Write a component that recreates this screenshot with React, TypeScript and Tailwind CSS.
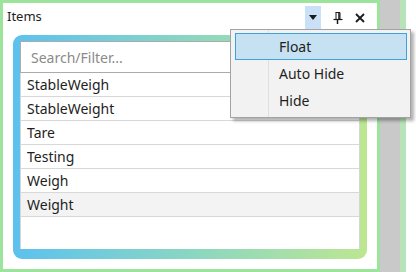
import React from "react"

const items = ["StableWeigh", "StableWeight", "Tare", "Testing", "Weigh", "Weight"]
const menuItems = ["Float", "Auto Hide", "Hide"]

function PinIcon() {
  return (
    <svg width="10" height="12" viewBox="0 0 10 12" fill="none" stroke="#1a1a1a">
      <path d="M2.5 0.5 H7 V7 M3 0.5 V7" strokeWidth="1" />
      <path d="M6 0.5 V7" strokeWidth="1.5" />
      <path d="M0.5 7.5 H9.5" strokeWidth="1.2" />
      <path d="M4.5 7.5 V12" strokeWidth="1.5" />
    </svg>
  )
}

function CloseIcon() {
  return (
    <svg width="10" height="10" viewBox="0 0 10 10" stroke="#1a1a1a" strokeWidth="1.8">
      <path d="M1 1 L9 9 M9 1 L1 9" />
    </svg>
  )
}

export default function App() {
  return (
    <div className="relative flex w-[416px] h-[272px] bg-white font-['Segoe_UI','Noto_Sans',sans-serif] text-[#1e1e1e]">
      <div className="flex flex-col w-[380px] h-full border-[3px] border-[#9ce39c] bg-white">
        {/* header */}
        <div className="flex items-start h-[32px] pl-[4px] pr-[9px]">
          <span className="mt-[4px] text-[13px] leading-[18px]">Items</span>
          <div className="flex-1" />
          <button className="mt-[3px] w-[16px] h-[23px] bg-[#c9e0f7] flex items-center justify-center">
            <svg width="8" height="5" viewBox="0 0 8 5">
              <path d="M0 0 H8 L4 5 Z" fill="#1a1a1a" />
            </svg>
          </button>
          <button className="mt-[3px] ml-[8px] w-[18px] h-[23px] flex items-center justify-center">
            <PinIcon />
          </button>
          <button className="mt-[3px] ml-[5px] w-[16px] h-[23px] flex items-center justify-center">
            <CloseIcon />
          </button>
        </div>

        {/* gradient frame */}
        <div className="mx-[10px] rounded-[9px] bg-gradient-to-r from-[#5cc1ee] via-[#8ad6c2] to-[#bde690] pt-[6px] px-[7px] pb-[10px]">
          <div className="flex flex-col h-[208px] bg-white">
            <div className="h-[32px] border border-[#ababab] flex items-center pl-[10px] text-[14px] text-[#8a8a8a]">
              Search/Filter...
            </div>
            <div className="flex-1 flex flex-col border-x border-[#d6d6d6]">
              {items.map((item, i) => (
                <div
                  key={item}
                  className={`h-[24px] flex items-center pl-[6px] border-b border-[#d8d8d8] text-[14px] ${
                    i === items.length - 1 ? "bg-[#f3f3f3]" : "bg-white"
                  }`}
                >
                  {item}
                </div>
              ))}
            </div>
          </div>
        </div>
      </div>
      <div className="w-[20px] h-full bg-[#c9c9c9]" />
      <div className="w-[6px] h-full bg-[#b8e2b8]" />

      {/* context menu */}
      <div className="absolute left-[230px] top-[29px] w-[181px] h-[89px] bg-[#f2f2f2] border border-[#a3a3a3] shadow-[3px_3px_3px_rgba(0,0,0,0.3)] pt-[3px] pl-[4px] pr-[3px]">
        <div className="absolute left-[37px] top-0 bottom-0 w-px bg-[#e0e0e0]" />
        {menuItems.map((m, i) => (
          <div
            key={m}
            className={`relative h-[27px] flex items-center pl-[43px] text-[14px] border ${
              i === 0 ? "bg-[#c6e1f1] border-[#3ea2d8]" : "border-transparent"
            }`}
          >
            {m}
          </div>
        ))}
      </div>
    </div>
  )
}
